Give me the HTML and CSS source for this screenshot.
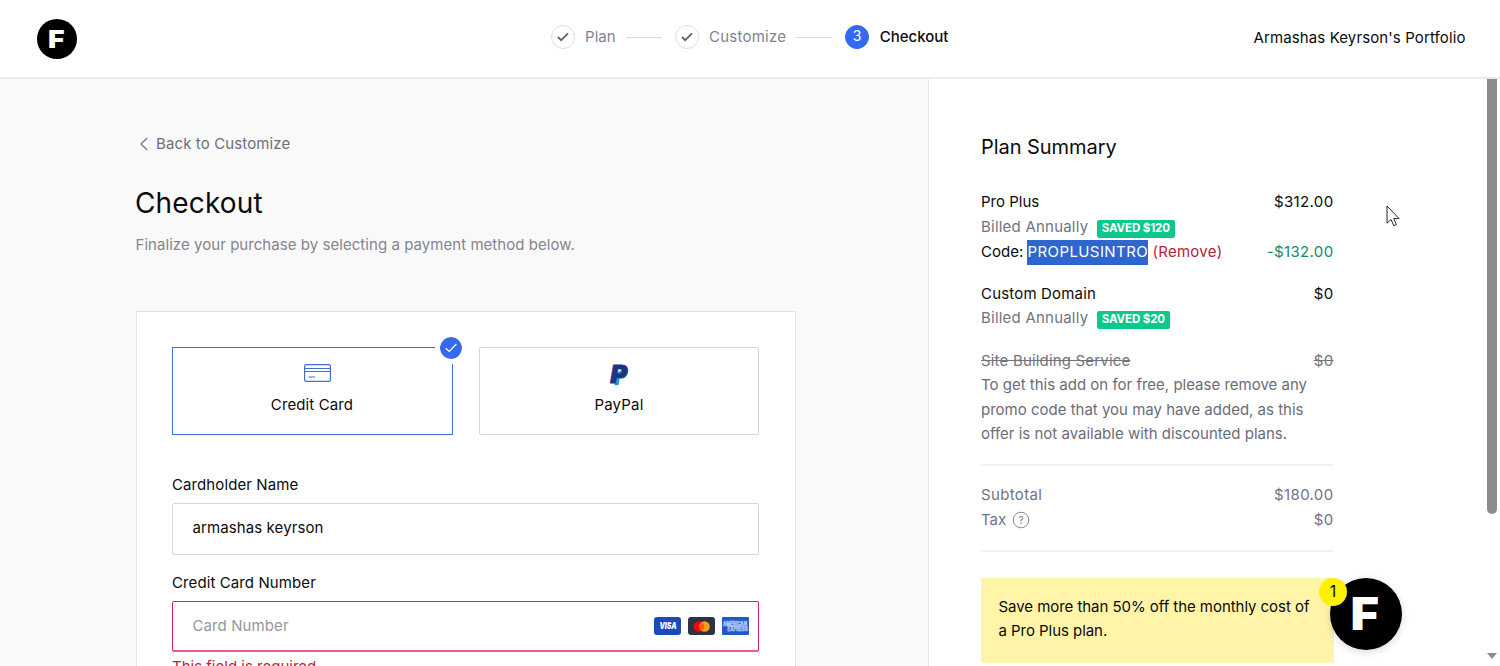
FILE: index.html
```html
<!DOCTYPE html>
<html lang="en">
  <head>
    <meta charset="UTF-8" />
    <meta name="viewport" content="width=device-width, initial-scale=1.0" />
    <title>Checkout</title>
    <link rel="stylesheet" href="styles.css">
  </head>
  <body>
    <header class="header">
      <div class="logo">
        <svg width="40" height="40" viewBox="0 0 40 40">
          <circle cx="20" cy="20" r="20" />
          <text class="logo-letter" x="11" y="29" font-size="25" textLength="16.5" lengthAdjust="spacingAndGlyphs">F</text>
        </svg>
      </div>
      <nav class="steps">
        <span class="step-dot">
          <svg width="12" height="10" viewBox="0 0 12 10"><path d="M1 5l3.2 3.2L11 1.4" /></svg>
        </span>
        <span class="step-name">Plan</span>
        <span class="step-line"></span>
        <span class="step-dot">
          <svg width="12" height="10" viewBox="0 0 12 10"><path d="M1 5l3.2 3.2L11 1.4" /></svg>
        </span>
        <span class="step-name customize">Customize</span>
        <span class="step-line"></span>
        <span class="step-dot current">3</span>
        <span class="step-name active">Checkout</span>
      </nav>
      <div class="site-name">Armashas Keyrson's Portfolio</div>
    </header>

    <div class="page">
      <main class="main">
        <a class="back">
          <svg width="8" height="14" viewBox="0 0 8 14"><path d="M7.2 1L1 7l6.2 6" /></svg>
          <span>Back to Customize</span>
        </a>
        <h1>Checkout</h1>
        <p class="intro">Finalize your purchase by selecting a payment method below.</p>

        <form class="card">
          <div class="methods">
            <div class="method selected">
              <svg width="27" height="18" viewBox="0 0 27 18">
                <rect x=".6" y=".6" width="25.8" height="16.8" rx="1.6" />
                <path d="M1 4.5h25M1 7.5h25M4.5 13h6.5" />
              </svg>
              <span>Credit Card</span>
              <div class="check">
                <svg width="12" height="10" viewBox="0 0 12 10"><path d="M.8 5.2l3.4 3.3L11.4 1" /></svg>
              </div>
            </div>
            <div class="method paypal">
              <svg width="19" height="22" viewBox="0 0 19 22">
                <path class="pp-shade" d="M15.8 4.5c1.8 1.2 2.2 3 1.7 5-.8 3.7-3.2 5.2-6.5 5.2H9.600L8.6 21.200H4.400L6 9z" />
                <text class="pp" x=".2" y="18.500" font-size="25" textLength="17" lengthAdjust="spacingAndGlyphs">P</text>
              </svg>
              <span>PayPal</span>
            </div>
          </div>

          <label>Cardholder Name</label>
          <div class="field"><span class="value">armashas keyrson</span></div>

          <label>Credit Card Number</label>
          <div class="field invalid">
            <span class="placeholder">Card Number</span>
            <div class="brands">
              <svg width="27" height="18" viewBox="0 0 27 18">
                <rect width="27" height="18" rx="3" fill="#1c49bd" />
                <text class="visa" x="5.5" y="12.4" font-size="8.5" textLength="17" lengthAdjust="spacingAndGlyphs">VISA</text>
              </svg>
              <svg width="27" height="18" viewBox="0 0 27 18">
                <rect width="27" height="18" rx="3" fill="#2d3340" />
                <circle cx="10.8" cy="9.5" r="5.3" fill="#eb0a12" />
                <circle cx="16.5" cy="9.5" r="5.3" fill="#f9a01b" />
                <path d="M13.65 5a5.3 5.3 0 0 1 0 9a5.3 5.3 0 0 1 0-9" fill="#fb6012" />
              </svg>
              <svg width="27" height="18" viewBox="0 0 27 18">
                <rect width="27" height="18" rx="1" fill="#2458c8" />
                <text class="amex" x="1" y="8.6" font-size="5.8" textLength="24" lengthAdjust="spacingAndGlyphs">AMERICAN</text>
                <text class="amex" x="5.5" y="14.4" font-size="5.8" textLength="20" lengthAdjust="spacingAndGlyphs">EXPRESS</text>
              </svg>
            </div>
          </div>
          <p class="error">This field is required</p>
        </form>
      </main>

      <aside class="summary">
        <h2>Plan Summary</h2>

        <section class="item">
          <div class="row"><span>Pro Plus</span><span class="price">$312.00</span></div>
          <div class="row"><span class="billed">Billed Annually <b class="saved">SAVED $120</b></span></div>
          <div class="row code">
            <span>Code: <mark>PROPLUSINTRO</mark> <a class="remove">(Remove)</a></span>
            <span class="price discount">-$132.00</span>
          </div>
        </section>

        <section class="item">
          <div class="row"><span class="name">Custom Domain</span><span class="price">$0</span></div>
          <div class="row"><span class="billed">Billed Annually <b class="saved">SAVED $20</b></span></div>
        </section>

        <section class="item note">
          <div class="row struck"><span class="name">Site Building Service</span><span class="price">$0</span></div>
          <p>
            To get this add on for free, please remove any<br>
            promo code that you may have added, as this<br>
            offer is not available with discounted plans.
          </p>
        </section>

        <section class="totals">
          <div class="row"><span class="price">Subtotal</span><span class="price">$180.00</span></div>
          <div class="row">
            <span class="tax">Tax
              <svg width="18" height="18" viewBox="0 0 18 18">
                <circle cx="9" cy="9" r="7.8" />
                <text x="9" y="12.5" text-anchor="middle">?</text>
              </svg>
            </span>
            <span class="price">$0</span>
          </div>
        </section>

        <p class="promo">Save more than 50% off the monthly cost of<br>a Pro Plus plan.</p>
      </aside>
      <div class="scrollbar">
        <div class="thumb"></div>
        <svg width="10" height="6" viewBox="0 0 10 6"><path d="M0 0h10L5 6z" /></svg>
      </div>
    </div>

    <div class="chat">
      <svg width="72" height="72" viewBox="0 0 72 72">
        <circle cx="36" cy="36" r="36" />
        <text class="logo-letter" x="20.5" y="52" font-size="45" textLength="28.5" lengthAdjust="spacingAndGlyphs">F</text>
      </svg>
      <span class="badge">1</span>
    </div>

    <svg class="pointer" width="14" height="22" viewBox="0 0 14 22">
      <path d="M1 1v17.2l4-3.7 2.8 6.2 2.6-1.2-2.7-5.9h5.4z" />
    </svg>
  </body>
</html>
```
FILE: styles.css
```css
* {
  padding: 0;
  margin: 0;
  box-sizing: border-box;
}
body {
  width: 1500px;
  height: 666px;
  overflow: hidden;
  position: relative;
  font-family: Inter, "Liberation Sans", sans-serif;
  font-size: 15px;
  color: #0b0b0d;
  background: #fff;
}
svg {
  display: block;
  flex: none;
}
span,
label,
p,
h1,
h2 {
  white-space: nowrap;
}

/* header */

.header {
  height: 79px;
  display: grid;
  grid-template-columns: 1fr auto 1fr;
  align-items: center;
  padding: 0 34.5px 1px 36.5px;
  border-bottom: 2px solid #ebebeb;
}
.logo {
  padding-top: 1px;
}
.logo-letter {
  fill: #fff;
  font-weight: 900;
}
.steps {
  display: flex;
  align-items: center;
  padding: 0 3px 2px 0;
}
.step-dot {
  width: 24px;
  height: 24px;
  border: 1px solid #dedee2;
  border-radius: 50%;
  display: flex;
  align-items: center;
  justify-content: center;
}
.step-dot path {
  fill: none;
  stroke: #62626c;
  stroke-width: 1.8;
}
.step-dot.current {
  background: #336af0;
  border-color: #336af0;
  color: #fff;
  font-size: 14px;
  padding-bottom: 3px;
}
.step-name {
  margin-left: 10.5px;
  padding-bottom: 1px;
  color: #83838c;
}
.step-name.customize {
  letter-spacing: .22px;
}
.step-name.active {
  color: #0b0b0d;
  font-weight: 500;
}
.step-line {
  width: 36px;
  height: 1px;
  margin: 0 13px 0 10px;
  background: #dadade;
}
.site-name {
  justify-self: end;
  padding-bottom: 1px;
  letter-spacing: .11px;
}

/* left column */

.page {
  display: flex;
  height: 587px;
  overflow: hidden;
}
.main {
  width: 928px;
  height: 587px;
  overflow: hidden;
  background: #f9f9f9;
  padding: 53px 132px 0 136px;
}
.back {
  display: flex;
  align-items: center;
  gap: 8px;
  height: 24px;
  padding-left: 4px;
  color: #6f6f7b;
  letter-spacing: .12px;
}
.back span {
  padding-bottom: 1px;
}
.back path {
  fill: none;
  stroke: #777782;
  stroke-width: 1.3;
}
h1 {
  margin: 27px 0 0 -1px;
  font-size: 28px;
  line-height: 40px;
  font-weight: 400;
  letter-spacing: .15px;
}
.intro {
  margin: 10px 0 0 -.5px;
  line-height: 24px;
  letter-spacing: .05px;
  color: #85858e;
}
.card {
  width: 660px;
  height: 355px;
  margin-top: 54px;
  padding: 35px 36px 0 35px;
  background: #fff;
  border: 1px solid #e3e3e5;
  border-bottom: 0;
}
.methods {
  display: flex;
  justify-content: space-between;
  margin-bottom: 38px;
}
.method {
  position: relative;
  width: 280px;
  height: 88px;
  padding-top: 16px;
  display: flex;
  flex-direction: column;
  align-items: center;
  gap: 7px;
  border: 1px solid #d6d6d8;
  border-radius: 2px;
  line-height: 24px;
  letter-spacing: .2px;
}
.method.selected {
  width: 281px;
  gap: 11px;
  border-color: #3b6fd6;
  border-radius: 0;
  padding-right: 1px;
  letter-spacing: .12px;
}
.method.selected > svg {
  margin-left: 11px;
  fill: none;
  stroke: #3f70d9;
  stroke-width: 1.2;
}
.check {
  position: absolute;
  right: -15px;
  top: -16px;
  width: 32px;
  height: 32px;
  border: 5px solid #fff;
  border-radius: 50%;
  background: #336af0;
  background-clip: padding-box;
  display: flex;
  align-items: center;
  justify-content: center;
}
.check path {
  fill: none;
  stroke: #fff;
  stroke-width: 1.2;
}
.paypal svg {
  overflow: visible;
}
.pp {
  font-weight: 900;
  font-style: italic;
  letter-spacing: 0;
  fill: #1d3580;
  stroke: #1d3580;
  stroke-width: .8;
}
.pp-shade {
  fill: #259bd6;
}
label {
  display: block;
  line-height: 24px;
  margin-bottom: 6px;
  letter-spacing: .1px;
}
.field {
  height: 52px;
  margin-bottom: 16px;
  padding: 0 9px 4px 19.5px;
  display: flex;
  align-items: center;
  justify-content: space-between;
  border: 1px solid #d6d6d8;
  border-radius: 2px;
  letter-spacing: .1px;
}
.field.invalid {
  height: 51px;
  border-color: #d32752;
  border-bottom: 2px solid #e65f82;
  margin-bottom: 3px;
  padding-bottom: 0;
}
.placeholder {
  padding-bottom: 2px;
  color: #96969f;
}
.brands {
  display: flex;
  gap: 7px;
  letter-spacing: 0;
}
.visa {
  fill: #fff;
  font-weight: 900;
  font-style: italic;
}
.amex {
  fill: none;
  stroke: #c5d7ff;
  stroke-width: .6;
  font-weight: 700;
}
.error {
  line-height: 24px;
  color: #c4233b;
}

/* plan summary */

.summary {
  width: 559px;
  padding: 55px 153.5px 0 52px;
  border-left: 1px solid #e6e6e8;
}
h2 {
  font-size: 20px;
  line-height: 26px;
  font-weight: 400;
  letter-spacing: -.05px;
}
.item,
.totals {
  line-height: 24.5px;
}
h2 + .item {
  margin-top: 30px;
}
.item + .item {
  margin-top: 18px;
}
.row {
  display: flex;
  justify-content: space-between;
  height: 24.5px;
}
.row.code {
  position: relative;
  top: 1px;
}
.price {
  letter-spacing: .35px;
}
.name {
  letter-spacing: .18px;
}
.billed,
.note,
.totals {
  color: #73737f;
}
.billed {
  letter-spacing: .22px;
}
.note p {
  color: #6c6c79;
}
.saved {
  display: inline-block;
  height: 18px;
  margin-left: 4px;
  padding: 0 5px;
  border-radius: 2px;
  background: #0bc98d;
  color: #fff;
  font-size: 11.5px;
  line-height: 17px;
  letter-spacing: -.1px;
}
mark {
  display: inline-block;
  background: #2f65cf;
  color: #fff;
  letter-spacing: .42px;
}
.remove {
  color: #b52336;
  letter-spacing: .3px;
}
.discount {
  color: #17896b;
}
.struck {
  text-decoration: line-through;
}
.totals {
  margin-top: 17px;
  padding: 17.5px 0;
  border-top: 2px solid #f2f2f4;
  border-bottom: 2px solid #f2f2f4;
}
.tax {
  display: flex;
  align-items: center;
  gap: 6px;
}
.tax circle {
  fill: none;
  stroke: #8b8b95;
}
.tax text {
  fill: #73737f;
  font-size: 10px;
}
.promo {
  height: 85px;
  margin-top: 26px;
  padding: 17px 17.5px;
  background: #fff4a8;
  line-height: 24px;
  letter-spacing: -.05px;
}

/* scrollbar */

.scrollbar {
  width: 13px;
  height: 587px;
  display: flex;
  flex-direction: column;
  justify-content: space-between;
  padding-bottom: 7px;
}
.scrollbar .thumb {
  width: 10px;
  height: 435px;
  background: #8b8b8b;
  border-radius: 0 0 5px 5px;
}
.scrollbar path {
  fill: #8b8b8b;
}

/* chat launcher floating over the page */

.chat {
  position: absolute;
  left: 1330px;
  top: 578px;
  border-radius: 50%;
  box-shadow: 0 2px 8px rgba(0, 0, 0, .15);
}
.badge {
  position: absolute;
  left: -11px;
  top: 0;
  width: 28px;
  height: 28px;
  border-radius: 50%;
  background: #fff000;
  font-size: 16px;
  line-height: 26px;
  text-align: center;
}
.pointer {
  position: absolute;
  left: 1386px;
  top: 205px;
  fill: #fff;
  stroke: #26262b;
}
```
